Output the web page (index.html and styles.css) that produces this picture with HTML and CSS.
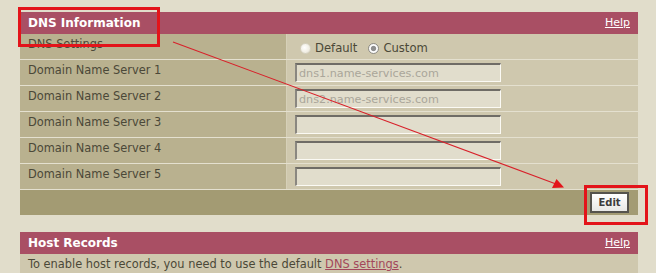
FILE: index.html
```html
<!DOCTYPE html>
<html>
<head>
<meta charset="utf-8">
<link rel="stylesheet" href="styles.css">
</head>
<body>
<div class="page">
  <section class="panel">
    <div class="panel-head">
      <span class="panel-title">DNS Information</span>
      <a class="help" href="#">Help</a>
    </div>
    <div class="row">
      <div class="label">DNS Settings</div>
      <div class="value radios">
        <span class="radio"></span><span class="rlabel">Default</span>
        <span class="radio checked"></span><span class="rlabel">Custom</span>
      </div>
    </div>
    <div class="row">
      <div class="label">Domain Name Server 1</div>
      <div class="value"><input class="field" type="text" value="dns1.name-services.com" readonly></div>
    </div>
    <div class="row">
      <div class="label">Domain Name Server 2</div>
      <div class="value"><input class="field" type="text" value="dns2.name-services.com" readonly></div>
    </div>
    <div class="row">
      <div class="label">Domain Name Server 3</div>
      <div class="value"><input class="field" type="text" value="" readonly></div>
    </div>
    <div class="row">
      <div class="label">Domain Name Server 4</div>
      <div class="value"><input class="field" type="text" value="" readonly></div>
    </div>
    <div class="row">
      <div class="label">Domain Name Server 5</div>
      <div class="value"><input class="field" type="text" value="" readonly></div>
    </div>
    <div class="panel-foot">
      <button class="btn" type="button">Edit</button>
    </div>
  </section>

  <section class="panel second">
    <div class="panel-head">
      <span class="panel-title">Host Records</span>
      <a class="help" href="#">Help</a>
    </div>
    <div class="note">To enable host records, you need to use the default <a class="link" href="#">DNS settings</a>.</div>
  </section>
</div>

<svg class="annot" width="656" height="273" viewBox="0 0 656 273" xmlns="http://www.w3.org/2000/svg">
  <rect x="19.5" y="8.5" width="139" height="37" fill="none" stroke="#e3141a" stroke-width="3"/>
  <rect x="585.5" y="186.5" width="61" height="37" fill="none" stroke="#e3141a" stroke-width="3"/>
  <line x1="173" y1="42" x2="556" y2="184" stroke="#d8202a" stroke-width="1.1"/>
  <polygon points="564,187.5 552,188 556.5,179" fill="#e3141a"/>
</svg>
</body>
</html>
```

FILE: styles.css
```css
html, body {
  margin: 0;
  padding: 0;
  background: #e1ddcb;
}
body {
  width: 656px;
  height: 273px;
  overflow: hidden;
  position: relative;
  font-family: "DejaVu Sans", Verdana, sans-serif;
  font-size: 11.4px;
  color: #4b4838;
}
.page {
  padding: 12px 18px 0 20px;
}
.panel {
  width: 618px;
}
.panel.second {
  margin-top: 17px;
}
.panel-head {
  height: 22px;
  background: #a94f64;
  display: flex;
  align-items: center;
  justify-content: space-between;
  padding: 0 8px;
  box-sizing: border-box;
}
.panel-title {
  color: #ffffff;
  font-weight: bold;
  font-size: 12px;
  line-height: 22px;
}
.help {
  color: #ffffff;
  font-size: 11px;
  text-decoration: underline;
  line-height: 22px;
}
.row {
  display: flex;
  height: 25px;
  border-bottom: 1px solid #e4e0cf;
}
.label {
  width: 258px;
  padding: 3px 0 0 8px;
  line-height: 14px;
  background: #b9b18f;
  border-right: 1px solid #d6d0b8;
}
.value {
  flex: 1;
  background: #cfc8ae;
  padding: 3px 0 0 8px;
  display: flex;
  align-items: flex-start;
}
.radios {
  align-items: center;
  padding: 3px 0 0 13px;
}
.radio {
  width: 11px;
  height: 11px;
  border-radius: 50%;
  background: radial-gradient(circle at 40% 40%, #ffffff 0%, #f1eee4 60%, #dcd8c8 100%);
  box-sizing: border-box;
  border: 1px solid #d6d2c2;
  margin-right: 4px;
}
.radio.checked {
  border: 1px solid #8e8c86;
  background: radial-gradient(circle, #8f8f8f 0 2.2px, #c8c8c8 2.6px, #ffffff 3.2px, #eeeeee 100%);
}
.rlabel {
  margin-right: 11px;
  font-size: 11.6px;
  color: #4b4838;
}
.field {
  width: 206px;
  height: 19px;
  box-sizing: border-box;
  margin: 0;
  padding: 0 0 0 2px;
  border-style: solid;
  border-width: 2px 1px 1px 2px;
  border-color: #6f6c66 #fbfaf4 #fbfaf4 #8a8780;
  background: #e1ddcc;
  font-family: "DejaVu Sans", Verdana, sans-serif;
  font-size: 11.2px;
  color: #aaa69a;
  outline: none;
}
.panel-foot {
  height: 25px;
  background: #a39b73;
  display: flex;
  justify-content: flex-end;
  align-items: flex-start;
  padding: 2px 9px 0 0;
  box-sizing: border-box;
}
.btn {
  width: 39px;
  height: 21px;
  box-sizing: border-box;
  border: 2px solid #55534d;
  background: linear-gradient(#ffffff, #e8e8e6);
  font-family: "DejaVu Sans", Verdana, sans-serif;
  font-size: 10px;
  font-weight: bold;
  color: #3c3c3c;
  padding: 0;
  margin: 0;
}
.note {
  background: #cfc8ae;
  padding: 3px 8px 4px;
  line-height: 14px;
}
.link {
  color: #a3475b;
  text-decoration: underline;
}
.annot {
  position: absolute;
  left: 0;
  top: 0;
  pointer-events: none;
}
```
